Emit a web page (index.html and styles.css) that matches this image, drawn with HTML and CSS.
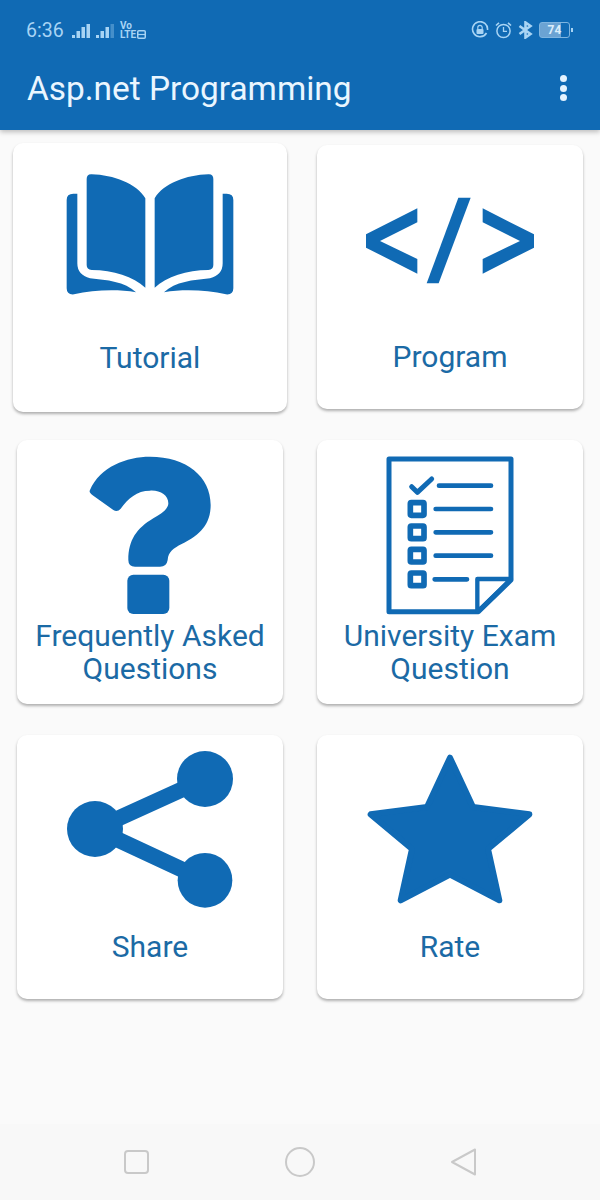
FILE: index.html
```html
<!DOCTYPE html>
<html lang="en">

<head>
    <meta charset="UTF-8">
    <meta name="viewport" content="width=device-width, initial-scale=1.0">
    <title>Asp.net Programming</title>
    <link rel="stylesheet" href="styles.css">
</head>

<body>
    <div class="page">
        <header class="header">
            <div class="status-bar">
                <span class="time">6:36</span>
                <svg class="signal" width="18" height="16" viewBox="0 0 18 16">
                    <rect x="0" y="12" width="3" height="3" />
                    <rect x="4.5" y="8" width="3.5" height="7" />
                    <rect x="9.5" y="4" width="3.5" height="11" />
                    <rect x="14.5" y="1" width="3.5" height="14" />
                </svg>
                <svg class="signal signal-second" width="18" height="16" viewBox="0 0 18 16">
                    <rect x="0" y="12" width="3" height="3" />
                    <rect x="4.5" y="8" width="3.5" height="7" />
                    <rect x="9.5" y="4" width="3.5" height="11" />
                    <rect x="14.5" y="1" width="3.5" height="14" opacity="0.35" />
                </svg>
                <div class="volte">
                    <span>Vo</span>
                    <span class="volte-row">LTE<svg width="9" height="9" viewBox="0 0 9 9">
                            <rect x="0.75" y="0.75" width="7.5" height="7.5" rx="1" fill="none" stroke="#a8d4f4" stroke-width="1.5" />
                            <path d="M1 4.5H8" stroke="#a8d4f4" stroke-width="1.2" />
                        </svg></span>
                </div>
                <div class="status-right">
                    <svg width="18" height="18" viewBox="0 0 18 18" fill="none" stroke="#a8d4f4">
                        <path d="M15.5 12A7.5 7.5 0 1 1 16.5 9" stroke-width="1.6" />
                        <path d="M6.8 8V6.6a2.2 2.2 0 0 1 4.4 0V8" stroke-width="1.2" />
                        <rect x="5.5" y="8" width="7" height="5" rx="1" fill="#a8d4f4" stroke="none" />
                    </svg>
                    <svg width="17" height="18" viewBox="0 0 17 18" fill="none" stroke="#a8d4f4">
                        <circle cx="8.5" cy="10" r="6.6" stroke-width="1.5" />
                        <path d="M8.5 6V10.4H12" stroke-width="1.3" />
                        <path d="M1 4.5L4 1.8M16 4.5L13 1.8" stroke-width="1.6" />
                    </svg>
                    <svg width="15" height="18" viewBox="0 0 15 18" fill="none" stroke="#a8d4f4" stroke-width="2.6">
                        <path d="M1.5 5L12.5 13L7.5 16.5V1.5L12.5 5L1.5 13" />
                    </svg>
                    <div class="battery">
                        <div class="battery-body">74</div>
                        <span class="battery-tip"></span>
                    </div>
                </div>
            </div>
            <div class="toolbar">
                <h1 class="title">Asp.net Programming</h1>
                <div class="menu-dots">
                    <span></span>
                    <span></span>
                    <span></span>
                </div>
            </div>
        </header>

        <main class="grid">
            <div class="card card-pressed">
                <svg class="card-icon" viewBox="198 60 504 498">
                    <g>
                        <path d="M260 132Q260 117 275 118C340 120 410 145 436 190V458C400 425 340 405 275 405Q260 403 260 390Z" />
                        <path d="M232 176V385Q232 420 270 430C320 435 375 440 408 472C350 462 280 465 222 478Q200 480 200 460V195Q200 176 220 176Z" />
                    </g>
                    <g transform="matrix(-1 0 0 1 900 0)">
                        <path d="M260 132Q260 117 275 118C340 120 410 145 436 190V458C400 425 340 405 275 405Q260 403 260 390Z" />
                        <path d="M232 176V385Q232 420 270 430C320 435 375 440 408 472C350 462 280 465 222 478Q200 480 200 460V195Q200 176 220 176Z" />
                    </g>
                </svg>
                <div class="card-label">Tutorial</div>
            </div>
            <div class="card">
                <svg class="card-icon" viewBox="198 66 504 498">
                    <path d="M352 220L198 298V338L352 416V372L240 318L352 262Z" />
                    <path d="M548 220L702 298V338L548 416V372L660 318L548 262Z" />
                    <path d="M475 188H512L416 445H380Z" />
                </svg>
                <div class="card-label">Program</div>
            </div>
            <div class="card">
                <svg class="card-icon" viewBox="198 66 504 498">
                    <path d="M270 180C300 110 380 80 450 80C560 80 632 140 632 225C632 290 590 320 545 342C520 355 505 365 503 390Q500 410 480 410H405Q385 410 385 390C385 330 410 295 460 265C490 248 505 235 505 220C505 195 480 180 450 182C410 182 385 205 362 236Q352 248 340 240L280 197Q265 188 270 180Z" />
                    <rect x="382" y="434" width="126" height="118" rx="18" />
                </svg>
                <div class="card-label">Frequently Asked Questions</div>
            </div>
            <div class="card">
                <svg class="card-icon card-icon-outline" viewBox="198 66 504 498" stroke-linecap="round" stroke-linejoin="round">
                    <path d="M267 87H633V450L535 545H267Z" stroke-width="15" />
                    <path d="M532 447H633L535 543H532Z" stroke-width="13" />
                    <path d="M335 170L352 187L395 147" stroke-width="15" />
                    <path d="M417 167H573M407 237H573M407 307H573M407 377H573M404 448H501" stroke-width="14" />
                    <rect x="331" y="218" width="41" height="38" rx="3" stroke-width="17" />
                    <rect x="331" y="288" width="41" height="38" rx="3" stroke-width="17" />
                    <rect x="331" y="358" width="41" height="38" rx="3" stroke-width="17" />
                    <rect x="331" y="429" width="41" height="38" rx="3" stroke-width="17" />
                </svg>
                <div class="card-label">University Exam Question</div>
            </div>
            <div class="card">
                <svg class="card-icon" viewBox="198 66 504 498">
                    <path d="M285 312L615 162M285 312L615 466" fill="none" stroke="#106ab4" stroke-width="48" />
                    <circle cx="615" cy="162" r="84" />
                    <circle cx="285" cy="312" r="84" />
                    <circle cx="615" cy="466" r="82" />
                </svg>
                <div class="card-label">Share</div>
            </div>
            <div class="card">
                <svg class="card-icon" viewBox="198 66 504 498">
                    <path d="M450 98L519 246L688 268L564 372L598 526L450 449L302 526L336 372L212 268L381 246Z" stroke="#106ab4" stroke-width="18" stroke-linejoin="round" />
                </svg>
                <div class="card-label">Rate</div>
            </div>
        </main>

        <nav class="nav-bar">
            <svg width="25" height="24" viewBox="0 0 25 24" fill="none" stroke="#c9c9c9" stroke-width="2">
                <rect x="1" y="1" width="23" height="22" rx="3" />
            </svg>
            <svg width="30" height="30" viewBox="0 0 30 30" fill="none" stroke="#c9c9c9" stroke-width="2">
                <circle cx="15" cy="15" r="14" />
            </svg>
            <svg width="25" height="28" viewBox="0 0 25 28" fill="none" stroke="#c9c9c9" stroke-width="2" stroke-linejoin="round">
                <path d="M1 14L24 1.5V26.5Z" />
            </svg>
        </nav>
    </div>
</body>

</html>
```

FILE: styles.css
```css
* {
    box-sizing: border-box;
}

body {
    margin: 0;
    font-family: Roboto, "Liberation Sans", sans-serif;
    background-color: #fafafa;
}

.page {
    height: 1200px;
    display: flex;
    flex-direction: column;
}

.header {
    height: 130px;
    background-color: #106ab4;
    box-shadow: 0 2px 5px rgba(0, 0, 0, 0.25);
    padding: 0 26px;
}

.status-bar {
    height: 60px;
    display: flex;
    align-items: center;
    color: #a8d4f4;
}

.time {
    font-size: 19.5px;
    width: 46px;
}

.signal {
    fill: #a8d4f4;
    margin-top: 1px;
}

.signal-second {
    margin-left: 6px;
}

.volte {
    display: flex;
    flex-direction: column;
    margin-left: 6px;
    font-size: 10px;
    font-weight: 700;
    line-height: 9px;
}

.volte-row {
    display: flex;
    align-items: center;
    gap: 1px;
}

.status-right {
    margin-left: auto;
    margin-right: 1px;
    display: flex;
    align-items: center;
    gap: 6px;
}

.battery {
    display: flex;
    align-items: center;
    gap: 1px;
}

.battery-body {
    width: 31px;
    height: 16px;
    border: 1px solid #7fb5e0;
    border-radius: 3px;
    background: linear-gradient(to right, #6ba3d3 74%, transparent 74%);
    font-size: 12px;
    font-weight: 700;
    line-height: 14px;
    text-align: center;
    color: #dceefb;
}

.battery-tip {
    width: 2px;
    height: 4px;
    background-color: #a8d4f4;
}

.toolbar {
    display: flex;
    align-items: center;
    justify-content: space-between;
    margin-right: 7px;
    height: 56px;
}

.title {
    margin: 0 0 0 1px;
    font-size: 33.4px;
    font-weight: 400;
    color: #eaf6ff;
}

.menu-dots {
    display: flex;
    flex-direction: column;
    gap: 2.5px;
}

.menu-dots span {
    width: 7px;
    height: 7px;
    border-radius: 50%;
    background-color: #e4f3ff;
}

.grid {
    flex: 1;
    padding: 15px 17px 0;
    display: grid;
    grid-template-columns: 266px 266px;
    grid-auto-rows: 263.5px;
    column-gap: 34px;
    row-gap: 31.5px;
    align-content: start;
}

.card {
    display: flex;
    flex-direction: column;
    align-items: center;
    padding: 12px 0 18px;
    background-color: white;
    border-radius: 10px;
    box-shadow: 0 2px 3px rgba(0, 0, 0, 0.3);
}

/* first card is caught mid press, a bit bigger than the others */
.card-pressed {
    margin: -2px -4px -3px;
}

.card-icon {
    width: 168px;
    height: 166px;
    flex-shrink: 0;
    fill: #106ab4;
}

.card-icon-outline {
    fill: none;
    stroke: #106ab4;
}

.card-label {
    flex: 1;
    display: flex;
    align-items: center;
    padding: 0 10px;
    font-size: 30px;
    line-height: 33px;
    text-align: center;
    color: #1b6aa5;
}

.nav-bar {
    height: 76px;
    padding: 0 124px;
    display: flex;
    align-items: center;
    justify-content: space-between;
    background-color: #f8f8f8;
}
```
